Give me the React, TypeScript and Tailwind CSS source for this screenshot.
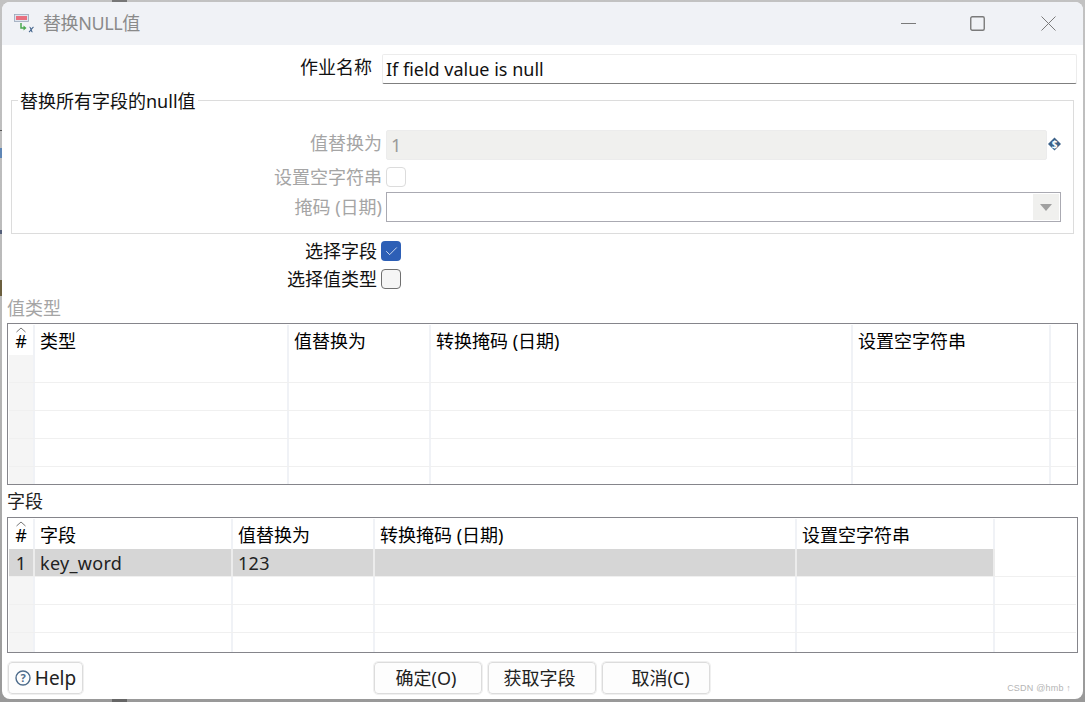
import React from "react";
import { Check } from "lucide-react";

type TableProps = {
    widths: string[];
    headers: string[];
    rows: string[][];
    heightClass: string;
    selectedRow?: number;
};

// Swing style table: grey frame, pale grid lines, row number column
const DataTable: React.FC<TableProps> = ({ widths, headers, rows, heightClass, selectedRow }) => (
    <div className={`${heightClass} mx-[5px] border border-[#85858b] px-px pt-px overflow-hidden`}>
        <div className="flex h-[30px]">
            {headers.map((h, i) => (
                <div
                    key={h}
                    className={`${widths[i]} shrink-0 border-r-2 border-[#f0f2f6] pt-[3px] text-[18px] leading-[26px] text-black relative ${i === 0 ? "text-center" : "pl-[5px]"}`}
                >
                    {i === 0 && (
                        <svg className="absolute left-[7px] top-[2px]" width="10" height="6" viewBox="0 0 10 6">
                            <path d="M0.5 5 L5 1 L9.5 5" fill="none" stroke="#777" strokeWidth="1" />
                        </svg>
                    )}
                    {h}
                </div>
            ))}
            <div className="flex-1" />
        </div>
        {rows.map((row, r) => (
            <div key={r} className="flex h-[28px] border-b border-[#f0f0f0]">
                {row.map((cell, i) => (
                    <div
                        key={i}
                        className={`${widths[i]} shrink-0 border-r-2 border-[#f0f2f6] text-[18px] leading-[28px] tracking-[0.3px] text-[#222] ${
                            r === selectedRow ? "bg-[#d6d6d6] border-r-[#ececec]" : i === 0 ? "bg-[#f5f5f5]" : ""
                        } ${i === 0 ? "text-center" : "pl-[5px]"}`}
                    >
                        {cell}
                    </div>
                ))}
                <div className="flex-1" />
            </div>
        ))}
    </div>
);

const FootButton: React.FC<{ className: string; children: React.ReactNode }> = ({ className, children }) => (
    <button className={`${className} h-[32px] rounded-[4px] border border-[#dcdcdc] bg-[#fdfdfd] text-[18px] leading-[30px] text-[#222] outline outline-1 outline-[#f0f0f0]`}>
        {children}
    </button>
);

const App: React.FC = () => {
    const font = { fontFamily: '"Noto Sans", "Noto Sans CJK SC", sans-serif' };
    const empty = (n: number) => Array.from({ length: n }, () => ["", "", "", "", ""]);

    return (
        <div className="relative w-[1085px] h-[702px] bg-gradient-to-b from-[#c2c2c2] via-[#b8b8b8] to-[#999999] pl-[2px] pt-[2px] pr-[2px] pb-[3px] overflow-hidden" style={font}>
            {/* bits of the window behind, peeking past the dialog edge */}
            <span className="absolute left-0 top-[130px] h-px w-[2px] bg-[#555555]" />
            <span className="absolute left-0 top-[148px] h-[10px] w-[2px] bg-[#5f86b5]" />
            <span className="absolute left-0 top-[230px] h-[4px] w-[2px] bg-[#55607a]" />
            <span className="absolute left-0 top-[280px] h-[16px] w-[2px] bg-[#6b5f3f]" />
            <span className="absolute left-[112px] top-0 h-[2px] w-[15px] bg-[#777777]" />
            <span className="absolute left-[112px] bottom-0 h-[3px] w-[15px] bg-[#666666]" />

            <div className="relative h-full rounded-[8px] bg-white overflow-hidden flex flex-col">
                {/* Title bar */}
                <div className="h-[43px] shrink-0 bg-[#f0f2f6] flex items-center pl-[12px]">
                    <svg width="22" height="22" viewBox="0 0 22 22">
                        <rect x="0.5" y="1.5" width="14" height="7" fill="#dfe5ee" stroke="#9aa7ba" strokeWidth="0.8" />
                        <rect x="2" y="3" width="11" height="4" fill="#e8707f" />
                        <path d="M7 10 V15 H10" fill="none" stroke="#4aa84f" strokeWidth="1.5" />
                        <path d="M9.5 12.5 L12.5 15 L9.5 17.5 Z" fill="#4aa84f" />
                        <path d="M15.5 14 C17 14 17 19 18.5 19 M19.5 14 C18 15 16.5 18 15 19" fill="none" stroke="#4a6a90" strokeWidth="1.2" />
                    </svg>
                    <span className="ml-[7px] text-[18px] tracking-[-0.4px] text-[#8a8a8a]">替换NULL值</span>
                    <div className="ml-auto flex items-center">
                        <svg className="mr-[54px]" width="15" height="15" viewBox="0 0 15 15">
                            <path d="M0 7.5 H15" stroke="#7a7a7a" strokeWidth="1" />
                        </svg>
                        <svg className="mr-[56px]" width="15" height="15" viewBox="0 0 15 15">
                            <rect x="0.75" y="0.75" width="13.5" height="13.5" rx="1.5" fill="none" stroke="#7a7a7a" strokeWidth="1.4" />
                        </svg>
                        <svg className="mr-[27px]" width="15" height="15" viewBox="0 0 15 15">
                            <path d="M0.5 0.5 L14.5 14.5 M14.5 0.5 L0.5 14.5" stroke="#7a7a7a" strokeWidth="1" />
                        </svg>
                    </div>
                </div>

                {/* Job name */}
                <div className="flex items-center h-[30px] mt-[9px] shrink-0">
                    <div className="w-[370px] pb-[3px] text-right text-[18px] text-[#111]">作业名称</div>
                    <div className="ml-[10px] w-[695px] h-[30px] rounded-[2px] border border-[#ececec] border-b-[#7f7f7f] pl-[3px] text-[18px] leading-[28px] text-[#111]">
                        If field value is null
                    </div>
                </div>

                {/* Replace all fields group */}
                <div className="relative ml-[9px] mt-[16px] h-[134px] w-[1063px] shrink-0 border border-[#dcdcdc]">
                    <span className="absolute left-[6px] top-[-11px] bg-white px-[2px] text-[18px] leading-[22px] text-[#111]">替换所有字段的null值</span>
                    <div className="flex items-center h-[30px] mt-[29px]">
                        <div className="w-[370px] pb-[4px] text-right text-[18px] text-[#a5a5a5] shrink-0">值替换为</div>
                        <div className="ml-[4px] w-[661px] h-[30px] rounded-[2px] border border-[#ececec] bg-[#f0f0ee] pl-[4px] text-[18px] leading-[28px] text-[#9a9a9a]">1</div>
                        <svg className="mb-[2px]" width="14" height="14" viewBox="0 0 14 14">
                            <path d="M7.5 0.5 L14 7 L7.5 13.5 L1 7 Z" fill="#3d6289" />
                            <text x="7.5" y="10.5" textAnchor="middle" fontSize="10" fontWeight="700" fill="#fff">$</text>
                        </svg>
                    </div>
                    <div className="flex items-center h-[20px] mt-[7px]">
                        <div className="w-[370px] text-right text-[18px] text-[#a5a5a5] shrink-0">设置空字符串</div>
                        <div className="ml-[4px] w-[20px] h-[20px] rounded-[4px] border border-[#dcdcdc] bg-white" />
                    </div>
                    <div className="flex items-center h-[30px] mt-[5px]">
                        <div className="w-[370px] text-right text-[18px] text-[#a5a5a5] shrink-0">掩码 (日期)</div>
                        <div className="ml-[4px] w-[675px] h-[30px] border border-[#aaaab2] bg-white flex justify-end p-px">
                            <div className="w-[26px] bg-[#f0f0ee] flex items-center justify-center">
                                <svg width="14" height="9" viewBox="0 0 14 9"><path d="M1 1 H13 L7 8 Z" fill="#a0a0a0" /></svg>
                            </div>
                        </div>
                    </div>
                </div>

                {/* Checkboxes */}
                <div className="flex items-center h-[20px] mt-[7px] shrink-0">
                    <div className="w-[375px] text-right text-[18px] text-[#111]">选择字段</div>
                    <div className="ml-[4px] w-[20px] h-[20px] rounded-[4px] bg-[#2d5fb6] flex items-center justify-center">
                        <Check size={15} strokeWidth={1.2} className="text-white" />
                    </div>
                </div>
                <div className="flex items-center h-[20px] mt-[8px] shrink-0">
                    <div className="w-[375px] text-right text-[18px] text-[#111]">选择值类型</div>
                    <div className="ml-[4px] w-[20px] h-[20px] rounded-[4px] border border-[#707070] bg-[#f5f5f5]" />
                </div>

                <div className="ml-[5px] mt-[7px] h-[27px] shrink-0 text-[18px] leading-[24px] text-[#a5a5a5]">值类型</div>
                <DataTable
                    heightClass="h-[162px] shrink-0"
                    widths={["w-[26px]", "w-[254px]", "w-[142px]", "w-[422px]", "w-[198px]"]}
                    headers={["#", "类型", "值替换为", "转换掩码 (日期)", "设置空字符串"]}
                    rows={empty(5)}
                />

                <div className="ml-[5px] mt-[4px] h-[28px] shrink-0 text-[18px] leading-[24px] text-[#222]">字段</div>
                <DataTable
                    heightClass="h-[136px] shrink-0"
                    selectedRow={0}
                    widths={["w-[26px]", "w-[198px]", "w-[142px]", "w-[422px]", "w-[198px]"]}
                    headers={["#", "字段", "值替换为", "转换掩码 (日期)", "设置空字符串"]}
                    rows={[["1", "key_word", "123", "", ""], ...empty(3)]}
                />

                {/* Footer buttons */}
                <div className="flex mt-[9px] shrink-0 relative">
                    <FootButton className="ml-[6px] w-[75px] flex items-center justify-center gap-[4px] text-[19px]">
                        <svg width="16" height="16" viewBox="0 0 16 16">
                            <circle cx="8" cy="8" r="7" fill="none" stroke="#4f6d8c" strokeWidth="1.4" />
                            <text x="8" y="12" textAnchor="middle" fontSize="11" fontWeight="700" fill="#4f6d8c">?</text>
                        </svg>
                        Help
                    </FootButton>
                    <FootButton className="ml-[291px] w-[108px] pr-[4px]">确定(O)</FootButton>
                    <FootButton className="ml-[6px] w-[108px] pr-[5px]">获取字段</FootButton>
                    <FootButton className="ml-[6px] w-[108px] pl-[9px]">取消(C)</FootButton>
                    <span className="absolute right-[12px] top-[20px] font-['Liberation_Sans'] text-[9px] leading-[12px] tracking-[0.2px] text-[#b5b5b5]">CSDN @hmb ↑</span>
                </div>
            </div>
        </div>
    );
};

export default App;
